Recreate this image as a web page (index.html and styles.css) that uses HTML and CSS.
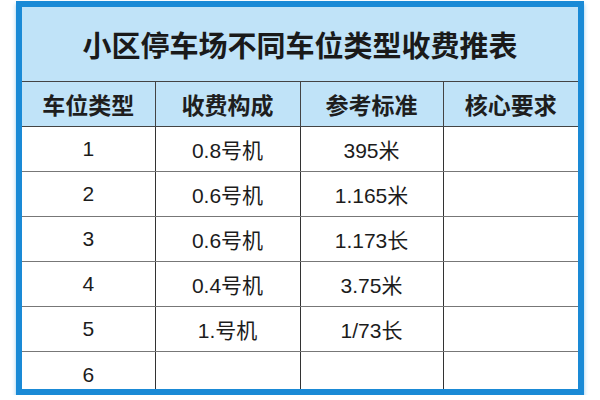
FILE: index.html
```html
<!DOCTYPE html>
<html lang="zh">
<head>
<meta charset="utf-8">
<link rel="stylesheet" href="styles.css">
</head>
<body>
<div class="frame">
  <table class="fees">
    <colgroup>
      <col class="c1"><col class="c2"><col class="c3"><col class="c4">
    </colgroup>
    <thead>
      <tr class="title-row"><th colspan="4" class="title">小区停车场不同车位类型收费推表</th></tr>
      <tr class="head-row"><th>车位类型</th><th>收费构成</th><th>参考标准</th><th>核心要求</th></tr>
    </thead>
    <tbody>
      <tr><td>1</td><td>0.8号机</td><td>395米</td><td></td></tr>
      <tr><td>2</td><td>0.6号机</td><td>1.165米</td><td></td></tr>
      <tr><td>3</td><td>0.6号机</td><td>1.173长</td><td></td></tr>
      <tr><td>4</td><td>0.4号机</td><td>3.75米</td><td></td></tr>
      <tr><td>5</td><td>1.号机</td><td>1/73长</td><td></td></tr>
      <tr class="cut"><td>6</td><td></td><td></td><td></td></tr>
    </tbody>
  </table>
</div>
</body>
</html>
```
FILE: styles.css
```css
html, body {
  margin: 0;
  padding: 0;
  background: #ffffff;
}
body {
  font-family: "Liberation Sans", "Noto Sans CJK SC", sans-serif;
  color: #1c1c1c;
}
.frame {
  margin: 1px 0 0 16px;
  width: 556px;
  height: 382px;
  border: 6px solid #1a8ad6;
  overflow: hidden;
  background: #ffffff;
  box-shadow: 0 3px 4px rgba(26, 138, 214, 0.45);
}
.fees {
  border-collapse: collapse;
  table-layout: fixed;
  width: 556px;
}
.c1 { width: 133px; }
.c2 { width: 145px; }
.c3 { width: 143px; }
.c4 { width: 135px; }
.fees th, .fees td {
  padding: 0;
  text-align: center;
  vertical-align: middle;
  border: 1px solid #444;
}
.fees tr > :first-child { border-left: none; }
.fees tr > :last-child { border-right: none; }
.title-row th { border-top: none; }
.title-row, .head-row { background: #c0e3f8; }
.title {
  height: 74px;
  font-family: "Noto Sans CJK SC", sans-serif;
  font-weight: 700;
  font-size: 29px;
  color: #1a1a1a;
  padding-top: 2px;
}
.head-row th {
  height: 44px;
  font-family: "Noto Sans CJK SC", sans-serif;
  font-weight: 700;
  font-size: 23px;
  color: #1e1e1e;
}
.fees tbody td {
  height: 44px;
  font-size: 21px;
  color: #1c1c1c;
  border-top-color: #777;
  border-bottom-color: #777;
  border-left-color: #333;
  border-right-color: #333;
}
.fees tbody tr.cut td {
  vertical-align: top;
  padding-top: 11px;
  border-bottom: none;
}
```
